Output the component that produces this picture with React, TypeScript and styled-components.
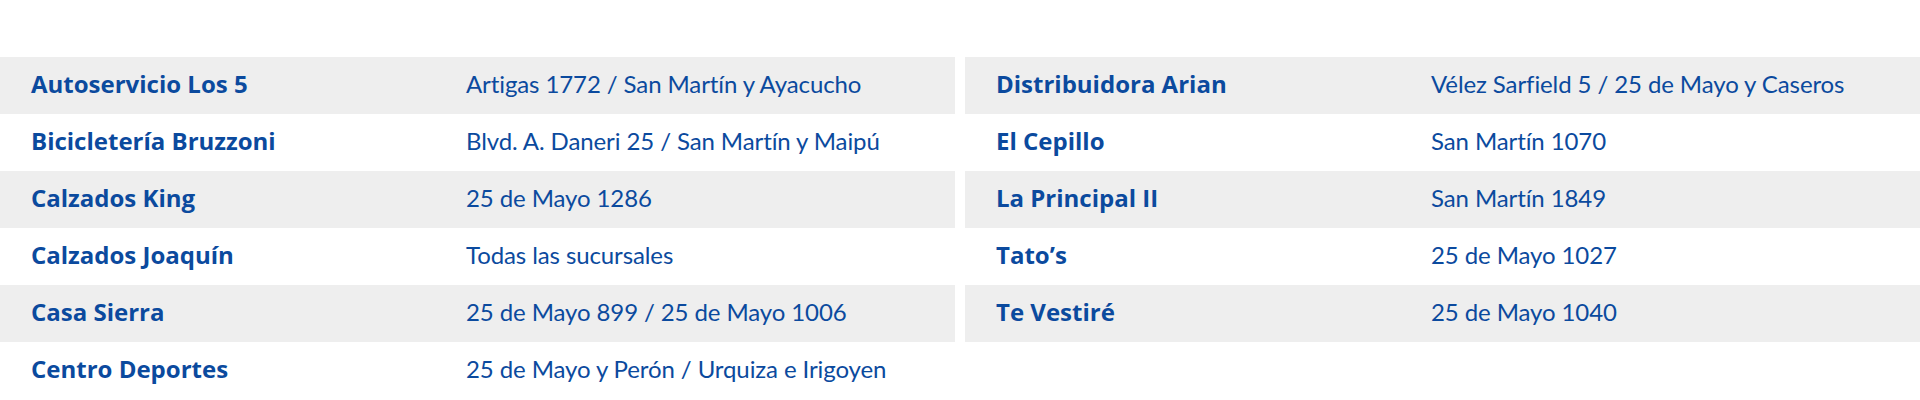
import styled, { createGlobalStyle } from 'styled-components';

const GlobalStyle = createGlobalStyle`
	html,
	body {
		margin: 0;
		padding: 0;
		background: #ffffff;
	}
	body {
		font-family: Lato, 'Noto Sans', 'Liberation Sans', sans-serif;
	}
`;

type Store = { name: string; address: string };

const leftStores: Store[] = [
	{ name: 'Autoservicio Los 5', address: 'Artigas 1772 / San Martín y Ayacucho' },
	{ name: 'Bicicletería Bruzzoni', address: 'Blvd. A. Daneri 25 / San Martín y Maipú' },
	{ name: 'Calzados King', address: '25 de Mayo 1286' },
	{ name: 'Calzados Joaquín', address: 'Todas las sucursales' },
	{ name: 'Casa Sierra', address: '25 de Mayo 899 / 25 de Mayo 1006' },
	{ name: 'Centro Deportes', address: '25 de Mayo y Perón / Urquiza e Irigoyen' },
];

const rightStores: Store[] = [
	{ name: 'Distribuidora Arian', address: 'Vélez Sarfield 5 / 25 de Mayo y Caseros' },
	{ name: 'El Cepillo', address: 'San Martín 1070' },
	{ name: 'La Principal II', address: 'San Martín 1849' },
	{ name: 'Tato’s', address: '25 de Mayo 1027' },
	{ name: 'Te Vestiré', address: '25 de Mayo 1040' },
];

function StoreTable({ stores }: { stores: Store[] }) {
	return (
		<Table>
			{stores.map((store, i) => (
				<Row key={store.name} $shaded={i % 2 === 0}>
					<StoreName>{store.name}</StoreName>
					<StoreAddress>{store.address}</StoreAddress>
				</Row>
			))}
		</Table>
	);
}

function App() {
	return (
		<>
			<GlobalStyle />
			<Page>
				<StoreTable stores={leftStores} />
				<StoreTable stores={rightStores} />
			</Page>
		</>
	);
}

const Page = styled.div`
	display: grid;
	grid-template-columns: 1fr 1fr;
	column-gap: 10px;
	padding-top: 57px;
	width: 1920px;
	box-sizing: border-box;
`;

const Table = styled.div`
	display: flex;
	flex-direction: column;
`;

const Row = styled.div<{ $shaded: boolean }>`
	display: grid;
	grid-template-columns: 435px 1fr;
	align-items: center;
	height: 57px;
	padding: 0 0 3px 31px;
	box-sizing: border-box;

	background: ${({ $shaded }) => ($shaded ? '#eeeeee' : '#ffffff')};
	color: #0b4a9e;
	line-height: 1;
`;

const StoreName = styled.span`
	font-family: 'Open Sans', 'Noto Sans', sans-serif;
	font-size: 24px;
	font-weight: 700;
	white-space: nowrap;
`;

const StoreAddress = styled.span`
	font-family: Lato, 'Noto Sans', sans-serif;
	font-size: 24px;
	font-weight: 400;
	letter-spacing: -0.1px;
	white-space: nowrap;
`;

export default App;
